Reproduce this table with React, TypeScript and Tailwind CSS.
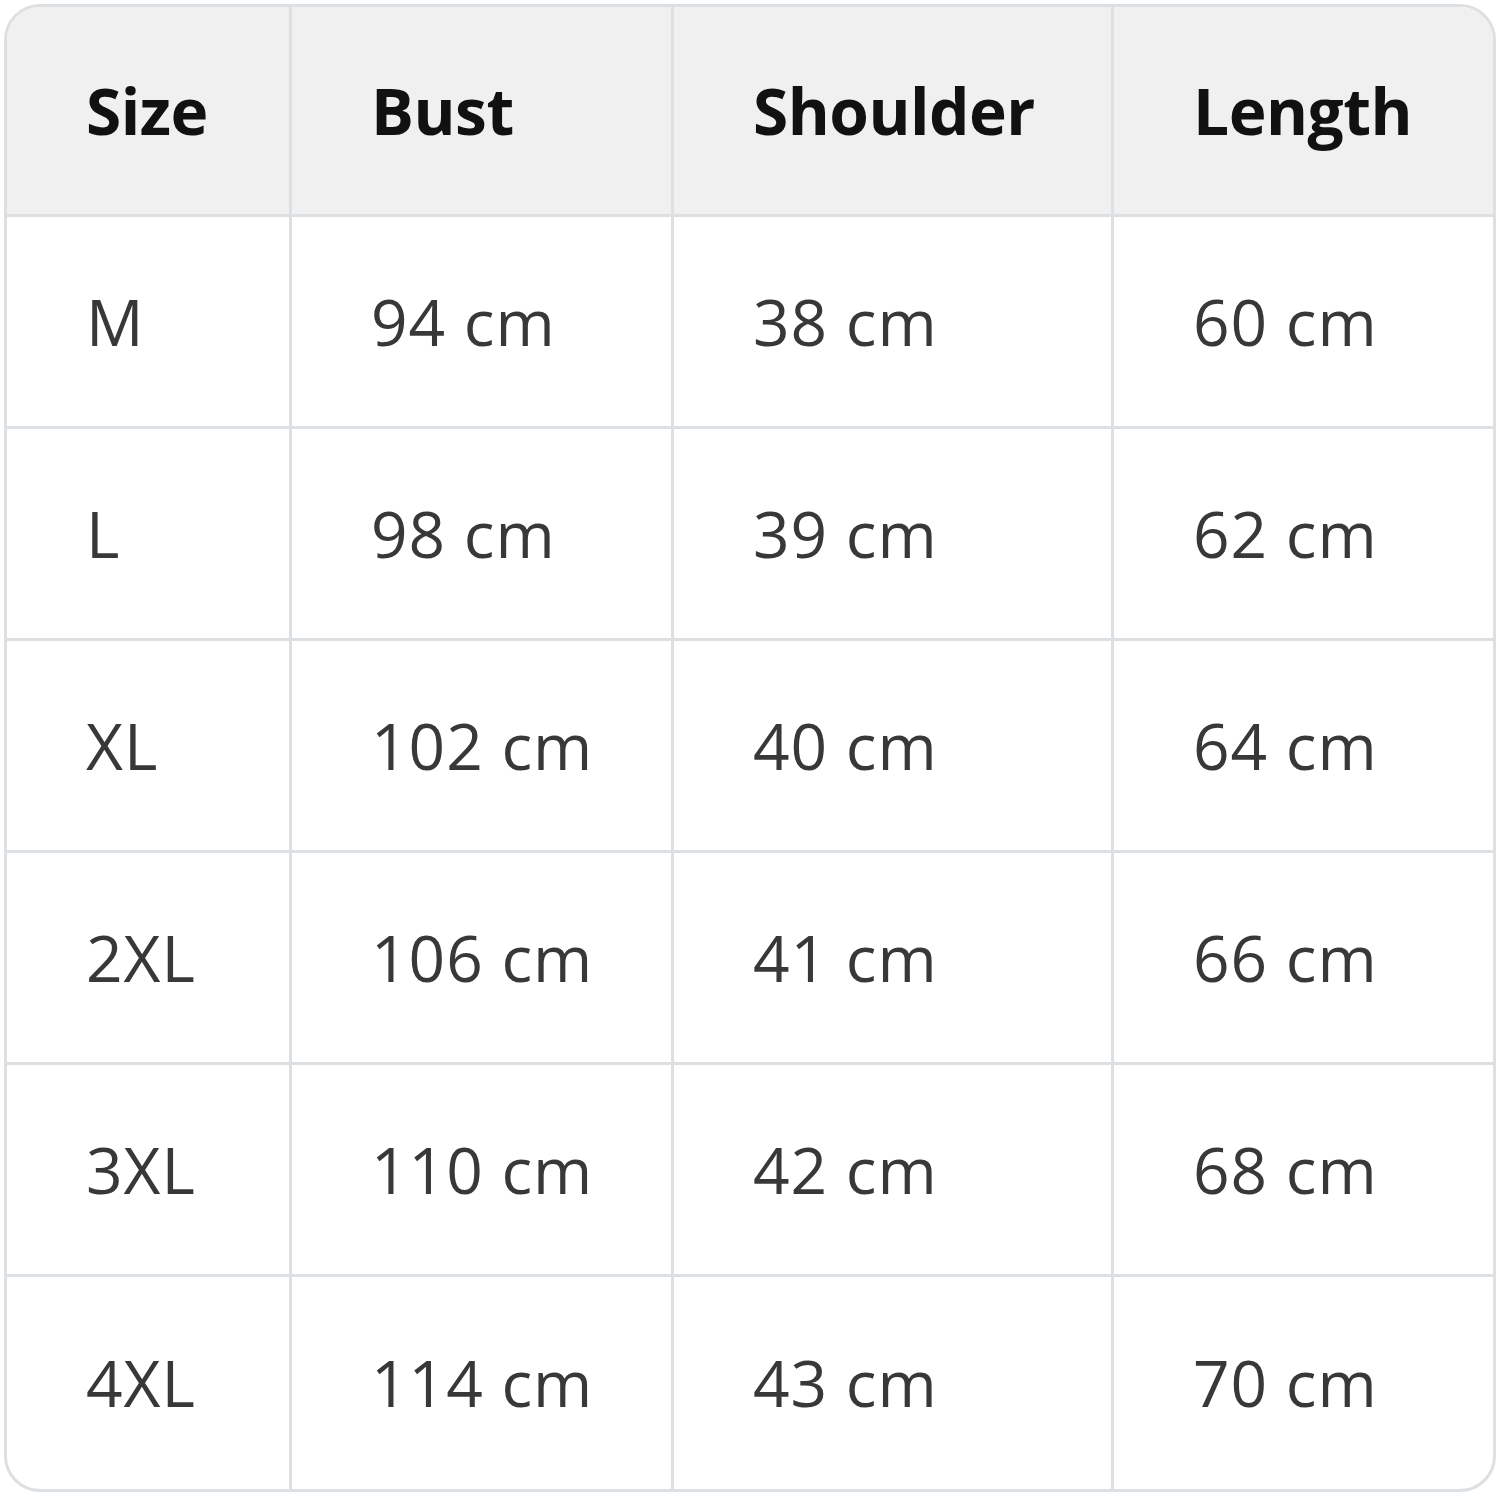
import React from 'react';

const headers = ['Size', 'Bust', 'Shoulder', 'Length'];

const rows = [
  ['M', '94 cm', '38 cm', '60 cm'],
  ['L', '98 cm', '39 cm', '62 cm'],
  ['XL', '102 cm', '40 cm', '64 cm'],
  ['2XL', '106 cm', '41 cm', '66 cm'],
  ['3XL', '110 cm', '42 cm', '68 cm'],
  ['4XL', '114 cm', '43 cm', '70 cm'],
];

export default function App() {
  return (
    <div className="w-[1500px] h-[1494px] bg-white p-[4px]">
      <div
        className="w-[1492px] border-[3px] border-[#dde0e3] rounded-[36px] overflow-hidden grid grid-cols-[285px_382px_440px_1fr]"
        style={{ fontFamily: '"Open Sans", "Noto Sans", sans-serif' }}
      >
        {headers.map((h, i) => (
          <div
            key={h}
            className={`h-[210px] bg-[#f0f0f0] border-b-[3px] border-[#dde0e3] flex items-center pl-[79px] text-[64px] font-bold text-[#111111] tracking-[-0.5px] ${i < 3 ? 'border-r-[3px]' : ''}`}
          >
            {h}
          </div>
        ))}
        {rows.map((row, r) =>
          row.map((cell, c) => (
            <div
              key={`${r}-${c}`}
              className={`h-[212px] flex items-center pl-[79px] text-[64px] text-[#383838] tracking-[1px] border-[#dde0e3] ${c < 3 ? 'border-r-[3px]' : ''} ${r < rows.length - 1 ? 'border-b-[3px]' : ''}`}
            >
              {cell}
            </div>
          ))
        )}
      </div>
    </div>
  );
}
